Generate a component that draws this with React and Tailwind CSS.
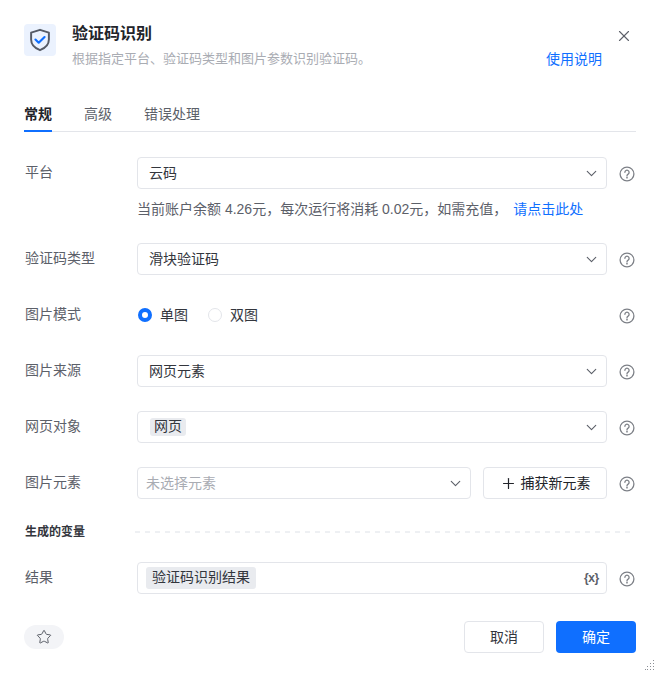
import React from 'react';
import { ChevronDown, X, Plus, Star } from 'lucide-react';

function HelpIcon() {
    return (
        <svg width="16" height="16" viewBox="0 0 16 16" fill="none" className="shrink-0 text-[#7d8087]">
            <circle cx="8" cy="8" r="6.9" stroke="currentColor" strokeWidth="1.3" />
            <path d="M5.9 6.3a2.1 2.1 0 1 1 3.2 1.8c-.7.4-1.1.8-1.1 1.6v.2" stroke="currentColor" strokeWidth="1.3" strokeLinecap="round" />
            <circle cx="8" cy="11.7" r="0.85" fill="currentColor" />
        </svg>
    );
}

function Chip({ children }) {
    return <span className="ml-px block h-[18px] w-fit rounded-[3px] bg-[#e9ebef] px-1 text-[14px] leading-[17px] text-[#33363d]">{children}</span>;
}

function Select({ children, className = 'w-[470px]' }) {
    return (
        <div className={`flex h-8 items-center justify-between rounded-[4px] border border-[#e3e5ea] bg-white pl-[11px] pr-[6px] text-[14px] text-[#33363d] ${className}`}>
            <div className="leading-[20px]">{children}</div>
            <ChevronDown size={17} strokeWidth={1.6} className="text-[#5c6069]" />
        </div>
    );
}

function Row({ label, children }) {
    return (
        <div className="flex items-start">
            <div className="w-[113px] shrink-0 pl-px pt-[4px] text-[14px] leading-[22px] text-[#5c6069]">{label}</div>
            <div className="w-[470px] shrink-0">{children}</div>
            <div className="ml-[12px] mt-[9px]"><HelpIcon /></div>
        </div>
    );
}

function Radio({ checked, label }) {
    return (
        <div className="flex items-center gap-2">
            {checked ? (
                <span className="h-[14px] w-[14px] rounded-full border-[4px] border-[#0f6fff] bg-white"></span>
            ) : (
                <span className="h-[14px] w-[14px] rounded-full border border-[#e3e5ea] bg-white"></span>
            )}
            <span className="text-[14px] leading-[20px] text-[#33363d]">{label}</span>
        </div>
    );
}

export default function App() {
    return (
        <div className="relative h-[677px] w-[660px] bg-white px-6 pt-6 font-['Liberation_Sans','Noto_Sans_CJK_SC',sans-serif]">
            {/* Header */}
            <div className="flex h-[44px] items-start">
                <div className="flex h-8 w-8 items-center justify-center rounded-[4px] bg-[#ebf2fe]">
                    <svg width="26" height="26" viewBox="0 0 24 24" fill="none">
                        <path d="M12 2.6l8.2 2.6v6.4c0 4.6-3.4 8-8.2 9.8-4.8-1.8-8.2-5.2-8.2-9.8V5.2L12 2.6z" stroke="#565b66" strokeWidth="1.8" strokeLinejoin="round" />
                        <path d="M7.8 11.6l3 2.9 5.4-5.2" stroke="#0f6fff" strokeWidth="2" strokeLinecap="round" strokeLinejoin="round" />
                    </svg>
                </div>
                <div className="ml-4 flex-1">
                    <div className="text-[16px] leading-[20px] font-semibold text-[#22242a]">验证码识别</div>
                    <div className="mt-[6px] flex items-center justify-between text-[13px] leading-[18px] text-[#a9acb3]">
                        <span>根据指定平台、验证码类型和图片参数识别验证码。</span>
                        <a className="mr-[13px] text-[14px] text-[#0f6fff]">使用说明</a>
                    </div>
                </div>
                <X size={18} strokeWidth={1.5} className="mr-[3px] mt-[3px] text-[#5c6069]" />
            </div>

            {/* Tabs */}
            <div className="mt-[24px] flex h-[40px] gap-8 border-b border-[#e3e5ea] pt-[11px] text-[14px] leading-[22px] text-[#5c6069]">
                <div className="h-[29px] border-b-2 border-[#0f6fff] font-semibold text-[#22242a]">常规</div>
                <div>高级</div>
                <div>错误处理</div>
            </div>

            {/* Form */}
            <div className="mt-[25px] flex flex-col gap-6">
                <Row label="平台">
                    <Select>云码</Select>
                    <div className="mt-[10px] text-[14px] leading-[20px] text-[#5c6069]">
                        当前账户余额 4.26元，每次运行将消耗 0.02元，如需充值，<span className="ml-[6px] text-[#0f6fff]">请点击此处</span>
                    </div>
                </Row>
                <Row label="验证码类型">
                    <Select>滑块验证码</Select>
                </Row>
                <Row label="图片模式">
                    <div className="flex h-8 items-center gap-5 pl-px">
                        <Radio checked label="单图" />
                        <Radio label="双图" />
                    </div>
                </Row>
                <Row label="图片来源">
                    <Select>网页元素</Select>
                </Row>
                <Row label="网页对象">
                    <Select><Chip>网页</Chip></Select>
                </Row>
                <Row label="图片元素">
                    <div className="flex gap-3">
                        <Select className="w-[334px]"><span className="-ml-[3px] text-[#a9acb3]">未选择元素</span></Select>
                        <div className="flex h-8 w-[124px] items-center justify-center gap-1 rounded-[4px] border border-[#e3e5ea] text-[14px] text-[#22242a]">
                            <Plus size={17} strokeWidth={1.7} className="shrink-0" />
                            <span className="whitespace-nowrap">捕获新元素</span>
                        </div>
                    </div>
                </Row>
            </div>

            {/* Variables */}
            <div className="mt-[24px] flex h-[18px] items-center">
                <div className="w-[111px] shrink-0 pl-px text-[12px] font-semibold text-[#33363d]">生成的变量</div>
                <div className="mr-[6px] h-[2px] flex-1 bg-[repeating-linear-gradient(90deg,#eef0f3_0_5px,transparent_5px_10px)]"></div>
            </div>
            <div className="mt-[21px]">
                <Row label="结果">
                    <div className="flex h-8 items-center justify-between rounded-[4px] border border-[#e3e5ea] pl-2 pr-[7px]">
                        <span className="inline-block h-[22px] rounded-[3px] bg-[#e9ebef] px-1.5 text-[14px] leading-[21px] text-[#33363d]">验证码识别结果</span>
                        <span className="text-[12px] font-bold tracking-[-0.3px] text-[#5c6069]">{'{x}'}</span>
                    </div>
                </Row>
            </div>

            {/* Footer */}
            <div className="mt-[27px] flex items-center justify-between">
                <div className="flex h-6 w-10 items-center justify-center rounded-full bg-[#f3f4f7]">
                    <Star size={16} strokeWidth={1.5} className="text-[#5c6069]" />
                </div>
                <div className="flex gap-3">
                    <button className="h-8 w-20 rounded-[4px] border border-[#e3e5ea] bg-white text-[14px] text-[#33363d]">取消</button>
                    <button className="h-8 w-20 rounded-[4px] bg-[#0f6fff] text-[14px] text-white">确定</button>
                </div>
            </div>

            {/* Resize handle */}
            <svg width="10" height="10" viewBox="0 0 10 10" className="absolute bottom-[7px] right-[5px] text-[#8b8e95]" fill="currentColor">
                <rect x="8" y="0" width="1" height="1" /><rect x="5" y="3" width="1" height="1" /><rect x="8" y="3" width="1" height="1" />
                <rect x="2" y="6" width="1" height="1" /><rect x="5" y="6" width="1" height="1" /><rect x="8" y="6" width="1" height="1" />
                <rect x="0" y="9" width="1" height="1" /><rect x="2" y="9" width="1" height="1" /><rect x="5" y="9" width="1" height="1" /><rect x="8" y="9" width="1" height="1" />
            </svg>
        </div>
    );
}
